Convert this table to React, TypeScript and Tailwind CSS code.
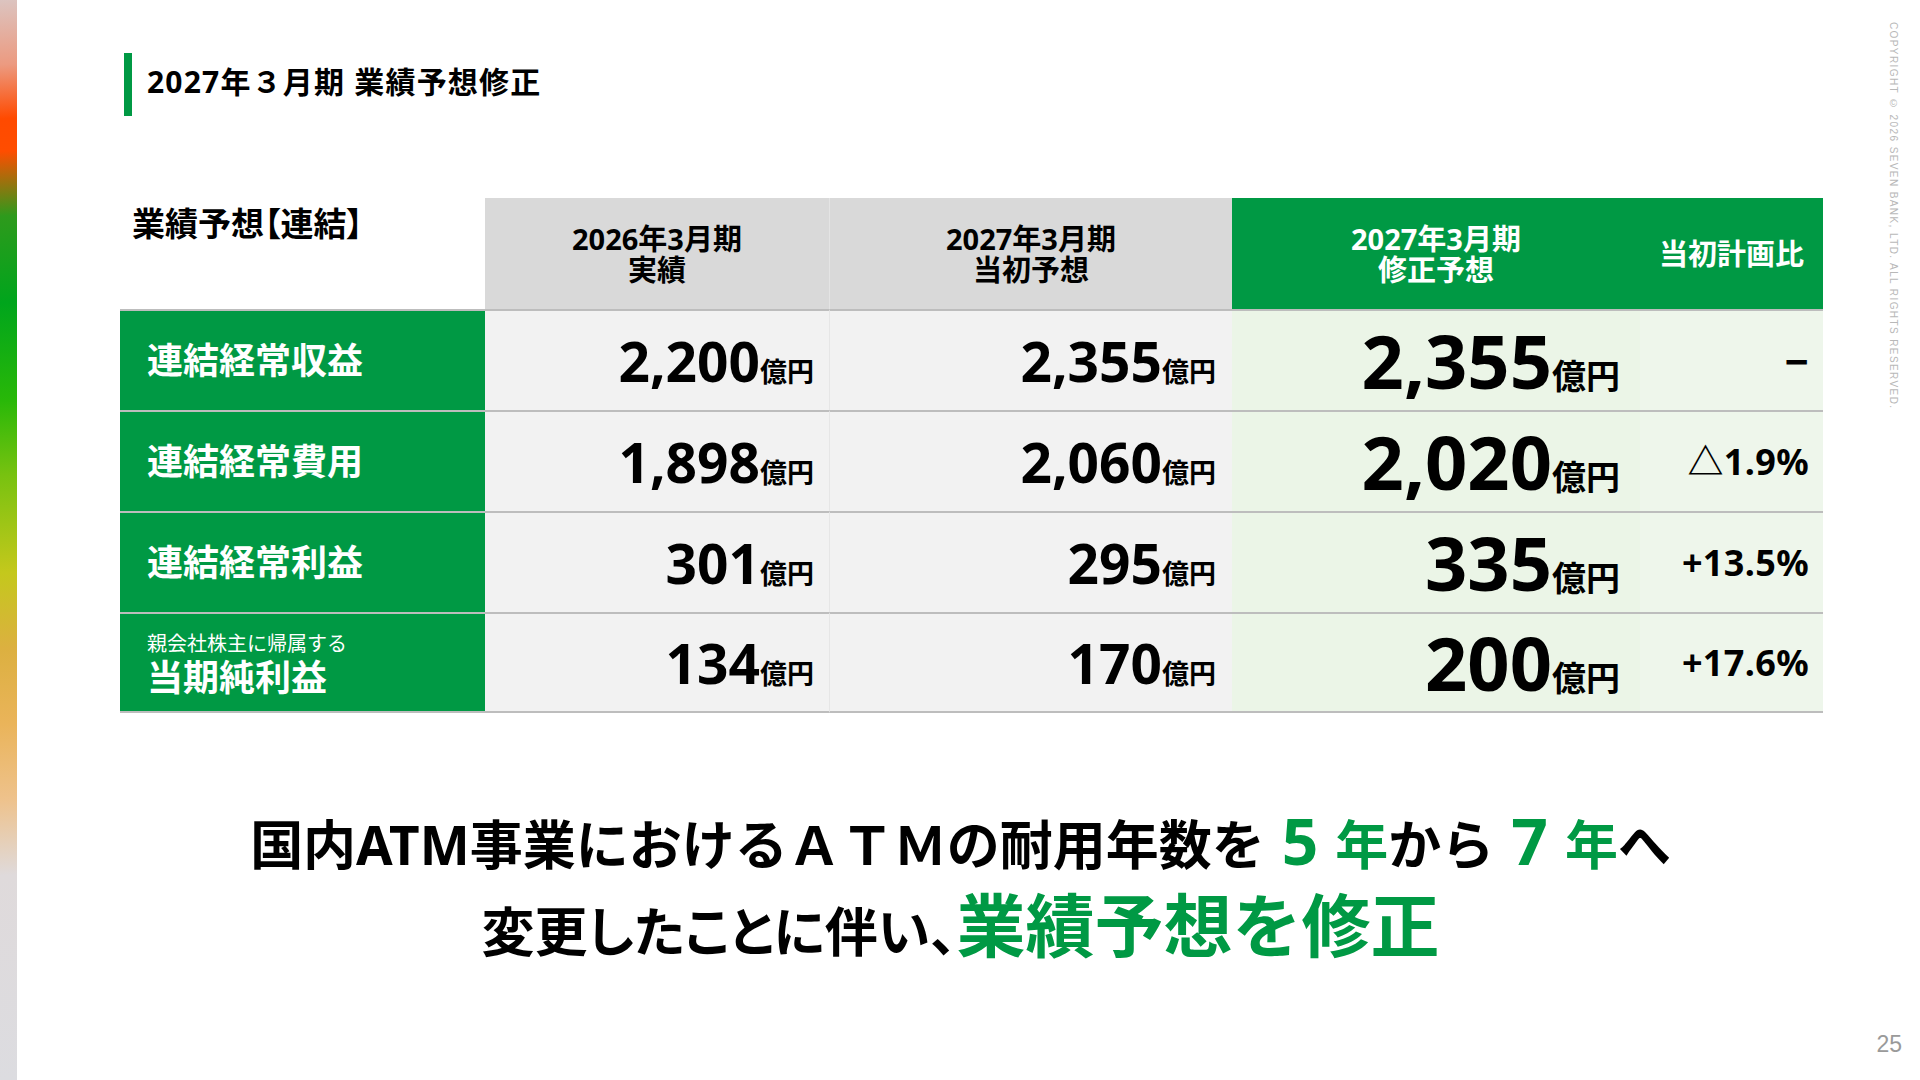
import React from 'react';

const font = "font-['Noto_Sans','Noto_Sans_CJK_JP',sans-serif]";

type Row = {
  label: string;
  note?: string;
  actual: string;
  initial: string;
  revised: string;
  ratio: string;
};

const rows: Row[] = [
  { label: '連結経常収益', actual: '2,200', initial: '2,355', revised: '2,355', ratio: '−' },
  { label: '連結経常費用', actual: '1,898', initial: '2,060', revised: '2,020', ratio: '△1.9%' },
  { label: '連結経常利益', actual: '301', initial: '295', revised: '335', ratio: '+13.5%' },
  { label: '当期純利益', note: '親会社株主に帰属する', actual: '134', initial: '170', revised: '200', ratio: '+17.6%' },
];

const Amount: React.FC<{ value: string; big?: boolean }> = ({ value, big }) => (
  <span className="flex items-baseline font-bold text-black">
    <span className={big ? 'text-[74px] leading-none' : 'text-[55px] leading-none'}>{value}</span>
    <span className={big ? 'text-[34px] leading-none' : 'text-[27px] leading-none'}>億円</span>
  </span>
);

const SideStrip: React.FC = () => (
  <div className="w-[17px] h-full shrink-0 bg-[linear-gradient(177deg,#dcc4c0_0%,#ec9a80_6%,#ff4a00_11%,#ff4d00_14%,#2e9a1c_20%,#00a51c_28%,#28b808_37%,#78c210_44%,#c4c81c_53%,#dcb040_60%,#eab45a_67%,#eec28c_74%,#dfdadb_81%,#dcdce0_100%)]" />
);

const HeadCell: React.FC<{ top: string; bottom: string; green?: boolean; sep?: boolean }> = ({ top, bottom, green, sep }) => (
  <div
    className={`h-[111px] flex flex-col items-center justify-center text-[29px] font-bold ${
      green ? 'bg-[#009944] text-white' : 'bg-[#d9d9d9] text-black'
    } ${sep ? 'border-l border-[#e4e4e4]' : ''}`}
  >
    <div className="leading-[31px]">{top}</div>
    <div className="leading-[31px]">{bottom}</div>
  </div>
);

const App: React.FC = () => {
  return (
    <div className={`flex w-[1920px] h-[1080px] bg-white overflow-hidden ${font}`}>
      <SideStrip />

      <div className="flex-1 flex flex-col">
        {/* title */}
        <div className="flex items-center mt-[53px] ml-[107px] h-[63px]">
          <div className="w-[8px] h-full bg-[#009944]" />
          <h1 className="ml-[15px] -mt-[6px] text-[30px] font-bold tracking-[0.04em] text-black">
            2027年３月期 業績予想修正
          </h1>
        </div>

        {/* table */}
        <div className="mt-[82px] ml-[103px] w-[1703px] grid grid-cols-[365px_344px_403px_408px_183px]">
          <div className="h-[111px] pl-[12px] pt-[5px] text-[33px] font-bold text-black leading-[42px] [font-feature-settings:'palt']">
            業績予想【連結】
          </div>
          <HeadCell top="2026年3月期" bottom="実績" />
          <HeadCell top="2027年3月期" bottom="当初予想" sep />
          <HeadCell top="2027年3月期" bottom="修正予想" green />
          <div className="h-[111px] bg-[#009944] flex items-center justify-center text-[29px] font-bold text-white">
            当初計画比
          </div>

          {rows.map((r, i) => {
            const line = `border-t-2 border-[#bdbdbd] ${i === rows.length - 1 ? 'border-b-2' : ''}`;
            const dash = r.ratio === '−';
            return (
              <React.Fragment key={r.label}>
                <div className={`h-[101px] bg-[#009944] ${line} flex flex-col justify-center pl-[27px] text-white`}>
                  {r.note && <div className="text-[20px] leading-[24px] mt-[6px] mb-[1px]">{r.note}</div>}
                  <div className="text-[36px] font-bold leading-[42px]">{r.label}</div>
                </div>
                <div className={`h-[101px] bg-[#f2f2f2] ${line} flex items-center justify-end pr-[15px]`}>
                  <Amount value={r.actual} />
                </div>
                <div className={`h-[101px] bg-[#f2f2f2] border-l border-l-[#e6e6e6] ${line} flex items-center justify-end pr-[16px]`}>
                  <Amount value={r.initial} />
                </div>
                <div className={`h-[101px] bg-[#ebf5e7] ${line} flex items-center justify-end pr-[20px]`}>
                  <Amount value={r.revised} big />
                </div>
                <div
                  className={`h-[101px] bg-[#eef6eb] ${line} flex items-center justify-end font-bold text-black ${
                    dash ? 'pr-[14px] text-[42px] font-black' : 'pr-[14px] text-[36px] tracking-[0.01em]'
                  }`}
                >
                  {r.ratio}
                </div>
              </React.Fragment>
            );
          })}
        </div>

        {/* message */}
        <div className="mt-[88px] pl-[34px] flex flex-col items-center font-bold text-black">
          <div className="leading-[80px] text-[53px] whitespace-nowrap">
            国内ATM事業におけるＡＴＭの耐用年数を
            <span className="text-[#009944] text-[64px] mx-[17px]">5</span>
            <span className="text-[#009944]">年</span>
            から
            <span className="text-[#009944] text-[64px] mx-[17px]">7</span>
            <span className="text-[#009944]">年</span>
            へ
          </div>
          <div className="leading-[80px] whitespace-nowrap">
            <span className="text-[53px] [font-feature-settings:'palt']">変更したことに伴い、</span>
            <span className="text-[69px] text-[#009944]">業績予想を修正</span>
          </div>
        </div>
      </div>

      {/* right margin: copyright + page number */}
      <div className="w-[50px] h-full shrink-0 flex flex-col items-end justify-between pr-[20px] pt-[22px] pb-[22px]">
        <div className="[writing-mode:vertical-rl] text-[10px] leading-[14px] tracking-[0.14em] text-[#b8b8b8] font-['Liberation_Sans',sans-serif]">
          COPYRIGHT © 2026 SEVEN BANK, LTD. ALL RIGHTS RESERVED.
        </div>
        <div className="text-[23px] leading-[28px] text-[#9a9a9a] font-['Liberation_Sans',sans-serif] -mr-[2px]">25</div>
      </div>
    </div>
  );
};

export default App;
